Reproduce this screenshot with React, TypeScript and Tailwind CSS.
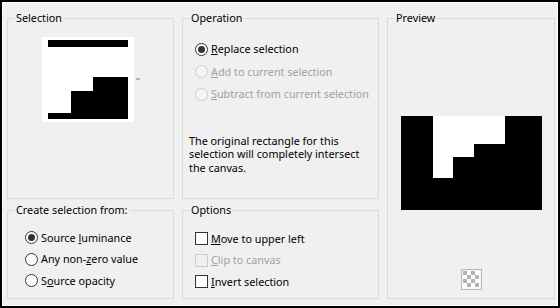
import clsx from "clsx";
import type { ReactNode } from "react";

function Radio({ checked, disabled }: { checked?: boolean; disabled?: boolean }) {
  return (
    <span
      className={clsx(
        "flex h-[13px] w-[13px] shrink-0 items-center justify-center rounded-full border",
        disabled ? "border-[#cccccc] bg-[#f4f4f4]" : "border-[#333333] bg-white"
      )}
    >
      {checked && <span className="h-[7px] w-[7px] rounded-full bg-[#333333]" />}
    </span>
  );
}

function Check({ disabled }: { disabled?: boolean }) {
  return (
    <span
      className={clsx(
        "h-[13px] w-[13px] shrink-0 border",
        disabled ? "border-[#cccccc] bg-[#f0f0f0]" : "border-[#333333] bg-white"
      )}
    />
  );
}

function Row({
  control,
  disabled,
  tall,
  children,
}: {
  control: ReactNode;
  disabled?: boolean;
  tall?: boolean;
  children: ReactNode;
}) {
  return (
    <div className={clsx("flex items-center gap-[3px]", tall ? "h-[22.5px]" : "h-[21.5px]")}>
      {control}
      <span className={disabled ? "text-[#a0a0a0]" : "text-black"}>{children}</span>
    </div>
  );
}

function Group({
  title,
  className,
  children,
}: {
  title: string;
  className?: string;
  children?: ReactNode;
}) {
  return (
    <fieldset className={clsx("border border-[#dadada]", className)}>
      <legend className="ml-[6px] px-[2px] leading-4 text-black">{title}</legend>
      {children}
    </fieldset>
  );
}

function SelectionThumb() {
  return (
    <svg width="92" height="85" viewBox="0 0 92 85">
      <rect width="92" height="85" fill="#ffffff" />
      <rect x="6" y="3" width="80" height="7" fill="#000" />
      <polygon points="6,76 29,76 29,54 51,54 51,40 86,40 86,82 6,82" fill="#000" />
    </svg>
  );
}

function PreviewImage() {
  return (
    <svg width="141" height="94" viewBox="0 0 141 94">
      <rect width="141" height="94" fill="#000" />
      <polygon points="32,0 104,0 104,28 73,28 73,41 52,41 52,62 32,62" fill="#fff" />
    </svg>
  );
}

function CheckerIcon() {
  const cells = [];
  for (let r = 0; r < 4; r++) {
    for (let c = 0; c < 4; c++) {
      if ((r + c) % 2 === 0) {
        cells.push(<rect key={`${r}-${c}`} x={2 + c * 4} y={2 + r * 4} width="4" height="4" fill="#b4b4b4" />);
      }
    }
  }
  return (
    <svg width="21" height="21" viewBox="0 0 21 21">
      <rect x="0.5" y="0.5" width="20" height="20" fill="#f4f4f4" stroke="#b8b8b8" />
      <rect x="2" y="2" width="17" height="17" fill="#ffffff" />
      {cells}
    </svg>
  );
}

export default function App() {
  return (
    <div className="h-[308px] w-[560px] border-2 border-black bg-white font-['Noto_Sans',sans-serif] text-[10.8px]">
      <div className="flex h-full gap-[8px] border border-white bg-[#f0f0f0] pl-[4px] pt-[7px]">
        <div className="flex w-[167px] flex-col gap-[3px]">
          <Group title="Selection" className="h-[189px]">
            <div className="ml-[34px] mt-[11px] flex items-start">
              <SelectionThumb />
              <span className="ml-[2px] mt-[41px] h-[2px] w-[4px] bg-[#b0b0b0]" />
            </div>
          </Group>
          <Group title="Create selection from:" className="h-[97px]">
            <div className="ml-[17px] mt-[9px]">
              <Row control={<Radio checked />}>
                Source <span className="underline">l</span>uminance
              </Row>
              <Row control={<Radio />}>
                Any non-<span className="underline">z</span>ero value
              </Row>
              <Row control={<Radio />}>
                S<span className="underline">o</span>urce opacity
              </Row>
            </div>
          </Group>
        </div>

        <div className="flex w-[197px] flex-col gap-[3px]">
          <Group title="Operation" className="h-[189px]">
            <div className="ml-[12px] mt-[12px]">
              <Row tall control={<Radio checked />}>
                <span className="underline">R</span>eplace selection
              </Row>
              <Row tall control={<Radio disabled />} disabled>
                <span className="underline">A</span>dd to current selection
              </Row>
              <Row tall control={<Radio disabled />} disabled>
                <span className="underline">S</span>ubtract from current selection
              </Row>
            </div>
            <p className="mt-[28px] pl-[6px] pr-[8px] leading-[13.5px] text-black">
              The original rectangle for this selection will completely intersect the canvas.
            </p>
          </Group>
          <Group title="Options" className="h-[97px]">
            <div className="ml-[12px] mt-[10px]">
              <Row control={<Check />}>
                <span className="underline">M</span>ove to upper left
              </Row>
              <Row control={<Check disabled />} disabled>
                <span className="underline">C</span>lip to canvas
              </Row>
              <Row control={<Check />}>
                <span className="underline">I</span>nvert selection
              </Row>
            </div>
          </Group>
        </div>

        <Group title="Preview" className="h-[289px] w-[168px]">
          <div className="ml-[13px] mt-[90px]">
            <PreviewImage />
          </div>
          <div className="ml-[73px] mt-[59px]">
            <CheckerIcon />
          </div>
        </Group>
      </div>
    </div>
  );
}
